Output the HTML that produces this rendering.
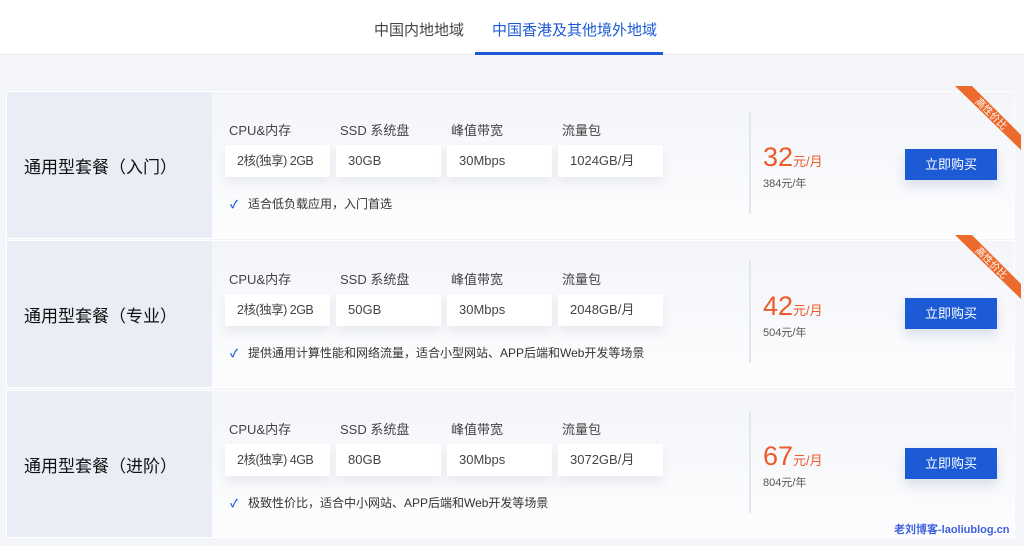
<!DOCTYPE html>
<html><head><meta charset="utf-8"><style>
*{margin:0;padding:0;box-sizing:border-box}
body{width:1024px;height:546px;overflow:hidden;background:#f3f5f9;font-family:"Liberation Sans","Noto Sans CJK SC",sans-serif;position:relative}
.hdr{position:absolute;left:0;top:0;width:1024px;height:55px;background:#fff;border-bottom:1px solid #e8ebf0}
.tab{position:absolute;top:19px;font-size:15px;color:#444}
.tab.on{color:#1c5ad6}
.ul{position:absolute;left:475px;top:52px;width:188px;height:3px;background:#1c5ad6}
.card{position:absolute;left:6px;width:1009px;height:148px;background:linear-gradient(180deg,#f3f5f9,#fdfdfe);border:1px solid #fff}
.left{position:absolute;left:0;top:0;width:205px;height:100%;background:#e9edf5}
.name{position:absolute;left:17px;top:61px;font-size:17px;color:#111}
.lab{position:absolute;top:28px;font-size:13px;color:#444}
.box{position:absolute;top:53px;width:105px;height:32px;background:#fff;font-size:13px;color:#444;line-height:32px;padding-left:12px;box-shadow:0 6px 10px rgba(30,50,90,.08)}
.feat{position:absolute;top:103px;left:223px;font-size:12px;color:#333}
.feat b{color:#1c5ad6;font-weight:bold;margin-right:10px;font-size:11px}
.div{position:absolute;left:742px;top:20px;width:2px;height:102px;background:#e3e6eb}
.price{position:absolute;left:756px;top:50px;color:#ee5a2a;font-size:27px}
.price span{font-size:13px}
.year{position:absolute;left:756px;top:83px;font-size:11px;color:#555}
.btn{position:absolute;left:898px;top:57px;width:92px;height:31px;background:#1c5ad6;color:#fff;font-size:13px;text-align:center;line-height:31px;box-shadow:0 6px 12px rgba(30,60,140,.15)}
.rib{position:absolute;left:948px;top:-6px}
</style></head><body>
<div class="hdr"><div class="tab" style="left:374px">中国内地地域</div><div class="tab on" style="left:492px">中国香港及其他境外地域</div><div class="ul"></div></div>

<div class="card" style="top:91px"><div class="left"></div><div class="name">通用型套餐（入门）</div>
<div class="lab" style="left:222px">CPU&amp;内存</div><div class="lab" style="left:333px">SSD 系统盘</div><div class="lab" style="left:444px">峰值带宽</div><div class="lab" style="left:555px">流量包</div>
<div class="box" style="left:218px;padding-left:12px;letter-spacing:-0.5px;font-size:12.5px">2核(独享) 2GB</div><div class="box" style="left:329px">30GB</div><div class="box" style="left:440px">30Mbps</div><div class="box" style="left:551px">1024GB/月</div>
<div class="feat"><b>✓</b>适合低负载应用，入门首选</div>
<div class="div"></div><div class="price">32<span>元/月</span></div><div class="year">384元/年</div><div class="btn">立即购买</div>
<svg class="rib" width="66" height="66"><polygon points="0,0 17,0 66,49 66,64" fill="#ec6a2c"/><text x="36" y="31" fill="#fff" font-size="10" transform="rotate(45 36 28)" text-anchor="middle" font-family="Noto Sans CJK SC">高性价比</text></svg></div>

<div class="card" style="top:240px"><div class="left"></div><div class="name">通用型套餐（专业）</div>
<div class="lab" style="left:222px">CPU&amp;内存</div><div class="lab" style="left:333px">SSD 系统盘</div><div class="lab" style="left:444px">峰值带宽</div><div class="lab" style="left:555px">流量包</div>
<div class="box" style="left:218px;padding-left:12px;letter-spacing:-0.5px;font-size:12.5px">2核(独享) 2GB</div><div class="box" style="left:329px">50GB</div><div class="box" style="left:440px">30Mbps</div><div class="box" style="left:551px">2048GB/月</div>
<div class="feat"><b>✓</b>提供通用计算性能和网络流量，适合小型网站、APP后端和Web开发等场景</div>
<div class="div"></div><div class="price">42<span>元/月</span></div><div class="year">504元/年</div><div class="btn">立即购买</div>
<svg class="rib" width="66" height="66"><polygon points="0,0 17,0 66,49 66,64" fill="#ec6a2c"/><text x="36" y="31" fill="#fff" font-size="10" transform="rotate(45 36 28)" text-anchor="middle" font-family="Noto Sans CJK SC">高性价比</text></svg></div>

<div class="card" style="top:390px"><div class="left"></div><div class="name">通用型套餐（进阶）</div>
<div class="lab" style="left:222px">CPU&amp;内存</div><div class="lab" style="left:333px">SSD 系统盘</div><div class="lab" style="left:444px">峰值带宽</div><div class="lab" style="left:555px">流量包</div>
<div class="box" style="left:218px;padding-left:12px;letter-spacing:-0.5px;font-size:12.5px">2核(独享) 4GB</div><div class="box" style="left:329px">80GB</div><div class="box" style="left:440px">30Mbps</div><div class="box" style="left:551px">3072GB/月</div>
<div class="feat"><b>✓</b>极致性价比，适合中小网站、APP后端和Web开发等场景</div>
<div class="div"></div><div class="price">67<span>元/月</span></div><div class="year">804元/年</div><div class="btn">立即购买</div>
<div style="position:absolute;left:887px;top:130px;font-size:11px;color:#3d5fe0;font-weight:bold">老刘博客-laoliublog.cn</div></div>
</body></html>
